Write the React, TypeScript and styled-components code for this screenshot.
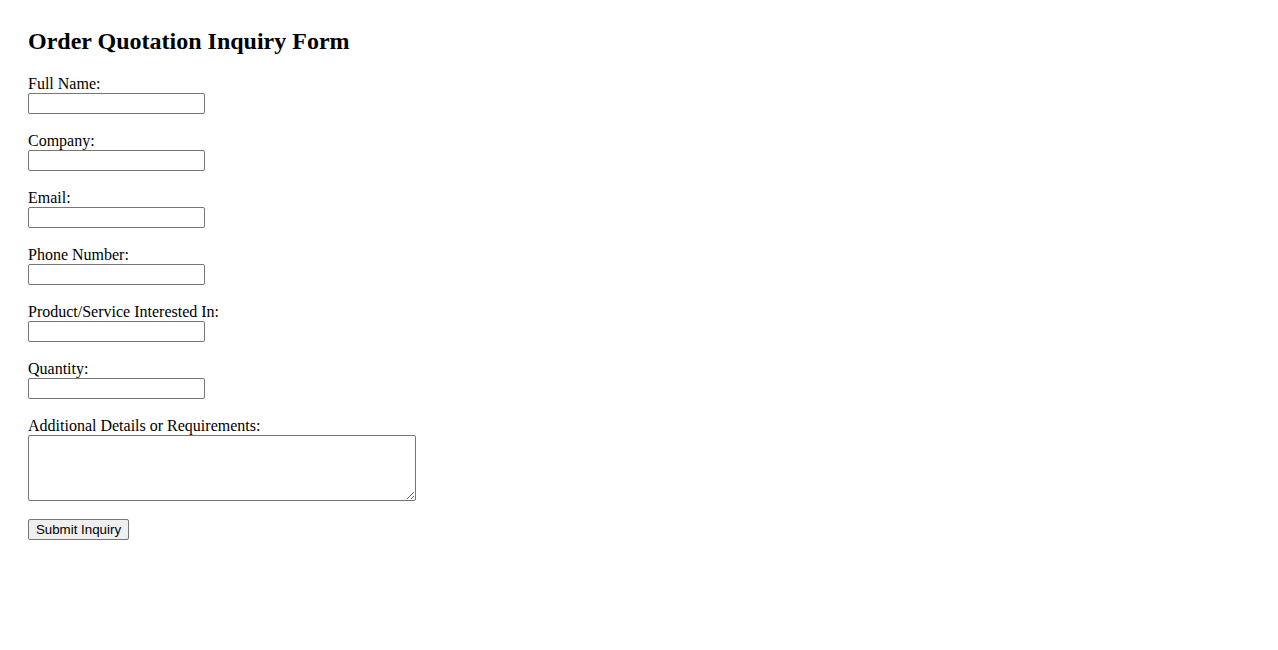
import React from 'react';
import styled, { createGlobalStyle } from 'styled-components';

const GlobalStyle = createGlobalStyle`
    body {
        margin: 0;
        background: #fff;
        font-family: "Liberation Serif", "Times New Roman", serif;
        font-size: 16px;
        color: #000;
    }
`;

const Page = styled.div`
    padding: 28px;
`;

const Title = styled.h2`
    margin: 0 0 20px;
    font-size: 24px;
    line-height: 27px;
    font-weight: 700;
`;

const Form = styled.form`
    display: flex;
    flex-direction: column;
    align-items: flex-start;
`;

const Field = styled.div`
    display: flex;
    flex-direction: column;
    align-items: flex-start;
    margin-bottom: 18px;
`;

const Label = styled.label`
    display: block;
    line-height: 18px;
`;

const TextInput = styled.input`
    box-sizing: border-box;
    width: 177px;
    height: 21px;
    margin: 0;
    padding: 1px 2px;
    border: 1px solid #767676;
    border-radius: 2px;
    background: #fff;
    font-family: "Liberation Sans", Arial, sans-serif;
    font-size: 13.33px;
`;

const TextArea = styled.textarea`
    box-sizing: border-box;
    width: 388px;
    height: 66px;
    margin: 0;
    padding: 2px;
    border: 1px solid #767676;
    border-radius: 2px;
    font-family: "Liberation Mono", monospace;
    font-size: 13.33px;
`;

const SubmitButton = styled.button`
    box-sizing: border-box;
    width: 101px;
    height: 21px;
    padding: 1px 6px;
    border: 1px solid #767676;
    border-radius: 2px;
    background: #efefef;
    color: #000;
    font-family: "Liberation Sans", Arial, sans-serif;
    font-size: 13.33px;
    line-height: 17px;
`;

const fields = [
    { id: 'name', label: 'Full Name:' },
    { id: 'company', label: 'Company:' },
    { id: 'email', label: 'Email:' },
    { id: 'phone', label: 'Phone Number:' },
    { id: 'product', label: 'Product/Service Interested In:' },
    { id: 'quantity', label: 'Quantity:' },
];

const App = () => {
    return (
        <>
            <GlobalStyle />
            <Page>
                <Title>Order Quotation Inquiry Form</Title>
                <Form onSubmit={(e) => e.preventDefault()}>
                    {fields.map((f) => (
                        <Field key={f.id}>
                            <Label htmlFor={f.id}>{f.label}</Label>
                            <TextInput id={f.id} type="text" />
                        </Field>
                    ))}
                    <Field>
                        <Label htmlFor="details">Additional Details or Requirements:</Label>
                        <TextArea id="details" />
                    </Field>
                    <SubmitButton type="submit">Submit Inquiry</SubmitButton>
                </Form>
            </Page>
        </>
    );
};

export default App;
